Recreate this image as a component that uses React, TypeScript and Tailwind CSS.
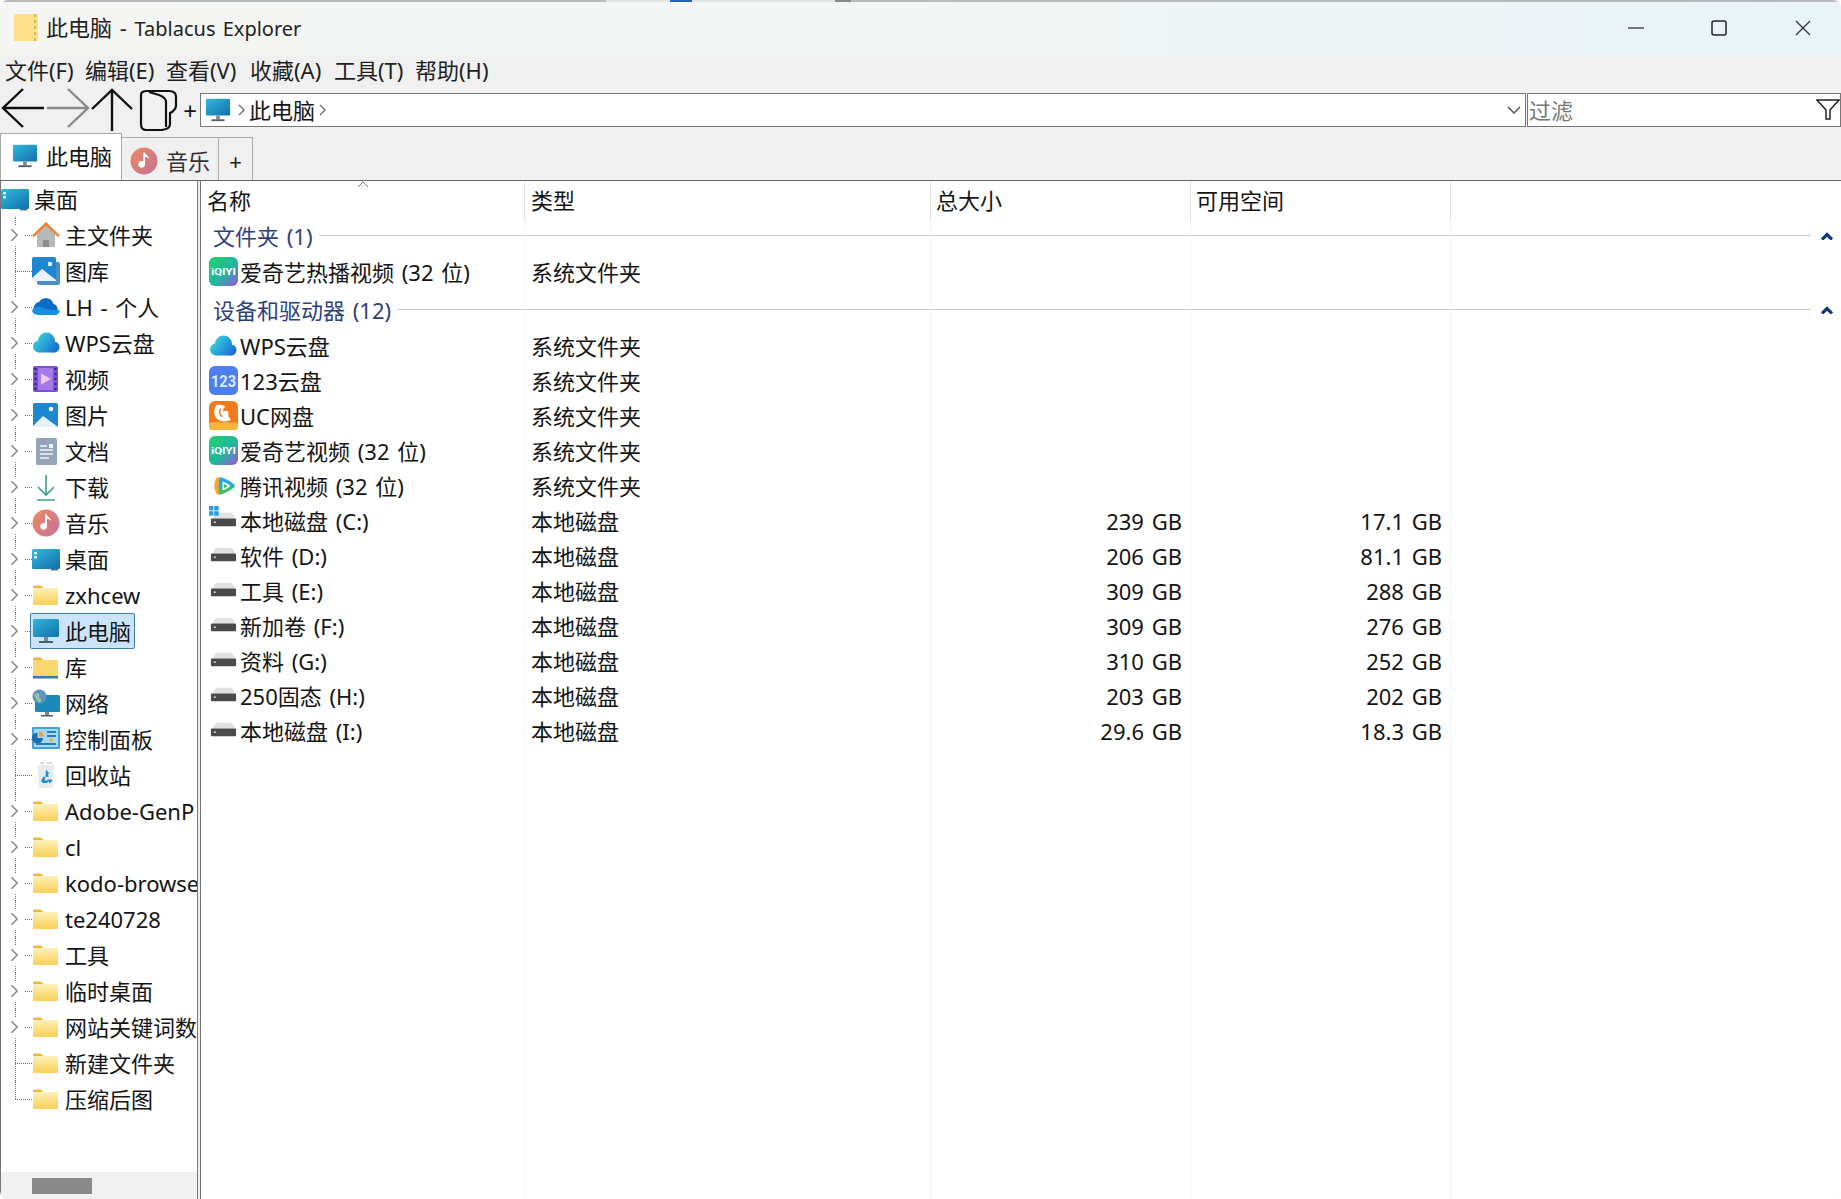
import React from "react";

const Monitor = ({ className = "w-7 h-7" }: { className?: string }) => (
  <svg viewBox="0 0 28 28" className={className}>
    <defs>
      <linearGradient id="mon" x1="0" y1="0" x2="1" y2="1">
        <stop offset="0" stopColor="#35b8e0" />
        <stop offset="1" stopColor="#0f6fa8" />
      </linearGradient>
    </defs>
    <rect x="1" y="2" width="26" height="18" rx="1.5" fill="url(#mon)" />
    <rect x="12" y="20" width="4" height="4" fill="#7a8a94" />
    <rect x="7" y="24" width="14" height="2" fill="#4e5d66" />
  </svg>
);

const Folder = () => (
  <svg viewBox="0 0 28 28" className="w-7 h-7">
    <defs>
      <linearGradient id="fold" x1="0" y1="0" x2="0" y2="1">
        <stop offset="0" stopColor="#fff0b8" />
        <stop offset="1" stopColor="#fbcf55" />
      </linearGradient>
    </defs>
    <path d="M1 6a1.5 1.5 0 0 1 1.5-1.5h6l3 2.5H1z" fill="#efb23c" />
    <rect x="1" y="7" width="25" height="17" rx="1" fill="url(#fold)" />
  </svg>
);

const LibFolder = () => (
  <svg viewBox="0 0 28 28" className="w-7 h-7">
    <path d="M1 6a1.5 1.5 0 0 1 1.5-1.5h6l3 2.500H1z" fill="#efb23c" />
    <rect x="1" y="7" width="25" height="17" rx="1" fill="#fcd76f" />
    <rect x="1" y="23" width="25" height="2.500" fill="#2c7ea6" />
  </svg>
);

const Home = () => (
  <svg viewBox="0 0 28 28" className="w-7 h-7">
    <path d="M5 13 14 5l9 8v12a1 1 0 0 1-1 1h-5v-7h-6v7H6a1 1 0 0 1-1-1z" fill="#b8b8b8" />
    <rect x="11" y="19" width="6" height="7" fill="#8c8c8c" />
    <path d="M0 14.500 14 1l14 13.500-2 1.500L14 5 2 16z" fill="#e8853a" />
  </svg>
);

const Gallery = () => (
  <svg viewBox="0 0 28 28" className="w-7 h-7">
    <rect x="5" y="5" width="23" height="23" rx="2" fill="#4b8fc4" />
    <rect x="0" y="0" width="24" height="24" rx="2" fill="#1d87d0" />
    <path d="M0 21 10 12l14 11v1H0z" fill="#e8f2fa" />
    <circle cx="18" cy="7" r="2.200" fill="#fff" />
  </svg>
);

const OneDrive = () => (
  <svg viewBox="0 0 28 28" className="w-7 h-7">
    <path d="M8 22a6.500 6.500 0 0 1-1-12.900A8 8 0 0 1 21.500 11 5.800 5.800 0 0 1 22 22z" fill="#0a6cc4" />
    <path d="M0 18c1-4 5-5 8-4 3 1 10 4 20 3-.5 3-2.500 5-5 5H7c-3 0-6-1-7-4z" fill="#1490df" />
  </svg>
);

const WpsCloud = () => (
  <svg viewBox="0 0 28 28" className="w-7 h-7">
    <defs>
      <linearGradient id="wps" gradientUnits="userSpaceOnUse" x1="2" y1="6" x2="26" y2="24">
        <stop offset="0" stopColor="#3fdcd8" />
        <stop offset="1" stopColor="#1462d8" />
      </linearGradient>
    </defs>
    <g fill="url(#wps)">
      <circle cx="7" cy="17.500" r="6" />
      <circle cx="14.500" cy="12" r="8.500" />
      <circle cx="22" cy="18" r="5.500" />
      <rect x="7" y="16" width="15" height="7.500" />
    </g>
  </svg>
);

const Video = () => (
  <svg viewBox="0 0 28 28" className="w-7 h-7">
    <rect x="1" y="1" width="25" height="26" rx="2" fill="#7c4fd8" />
    <rect x="6" y="3" width="15" height="22" fill="#a57bec" />
    <path d="M9 8.500 19 14 9 19.500z" fill="#f3c9f2" />
    <path d="M2.500 4h2M2.500 9h2M2.500 14h2M2.500 19h2M2.500 24h2M22.500 4h2M22.500 9h2M22.500 14h2M22.500 19h2M22.500 24h2" stroke="#35226e" strokeWidth="2" />
  </svg>
);

const Picture = () => (
  <svg viewBox="0 0 28 28" className="w-7 h-7">
    <rect x="1" y="2" width="25" height="24" rx="1.500" fill="#1d87d0" />
    <path d="M1 25 11 15l15 11H1z" fill="#e8f2fa" />
    <circle cx="19" cy="8" r="2.300" fill="#fff" />
  </svg>
);

const Doc = () => (
  <svg viewBox="0 0 28 28" className="w-7 h-7">
    <rect x="4" y="1" width="21" height="27" rx="1.500" fill="#93a3b8" />
    <path d="M8 9h7M8 13h13M8 17h13M8 21h9" stroke="#f2f5f8" strokeWidth="1.600" />
    <rect x="17" y="7" width="4" height="4" fill="#f2f5f8" />
  </svg>
);

const Download = () => (
  <svg viewBox="0 0 28 28" className="w-7 h-7" fill="none" stroke="#3aa28a" strokeWidth="1.600">
    <path d="M14 2v19M6 14l8 8 8-8M5 27h18" />
  </svg>
);

const Music = ({ className = "w-7 h-7" }: { className?: string }) => (
  <svg viewBox="0 0 28 28" className={className}>
    <defs>
      <linearGradient id="mus" x1="0" y1="0" x2="1" y2="1">
        <stop offset="0" stopColor="#ee8a5e" />
        <stop offset="1" stopColor="#c4729c" />
      </linearGradient>
    </defs>
    <circle cx="14" cy="14" r="13.500" fill="url(#mus)" />
    <path d="M15 5.500v11.800a3.400 3.400 0 1 1-1.800-3V5.500zM15 6c1 2.500 4 2.500 4 6-1.200-1.800-2.600-2.300-4-2.500z" fill="#fff" />
  </svg>
);

const Desktop = ({ className = "w-7 h-7" }: { className?: string }) => (
  <svg viewBox="0 0 28 28" className={className}>
    <defs>
      <linearGradient id="desk" x1="0" y1="0" x2="1" y2="1">
        <stop offset="0" stopColor="#35b8e0" />
        <stop offset="1" stopColor="#0f6fa8" />
      </linearGradient>
    </defs>
    <rect x="0" y="4" width="28" height="20" rx="1.500" fill="url(#desk)" />
    <rect x="19" y="24" width="7" height="1.500" fill="#4b7890" />
    <rect x="2" y="7" width="3" height="2.500" fill="#cfeef8" />
    <rect x="2" y="11" width="3" height="2.500" fill="#cfeef8" />
  </svg>
);

const Network = () => (
  <svg viewBox="0 0 28 28" className="w-7 h-7">
    <rect x="3" y="6" width="25" height="17" rx="1.500" fill="#1b8ab8" />
    <rect x="13" y="23" width="4" height="3" fill="#7a8a94" />
    <rect x="9" y="26" width="12" height="1.500" fill="#4e5d66" />
    <circle cx="7.500" cy="7.500" r="7" fill="#5d94bd" />
    <path d="M3 5c3-2 5 0 4 2s3 2 2 5-3 1-4-1-3-3-2-6z" fill="#9cc3a0" />
  </svg>
);

const Control = () => (
  <svg viewBox="0 0 28 28" className="w-7 h-7">
    <rect x="0" y="2" width="28" height="22" rx="1" fill="#3fa4dc" />
    <rect x="2" y="4" width="24" height="18" fill="#a6d8f2" />
    <path d="M11 13A5.500 5.500 0 1 1 5.500 7.500V13z" fill="#1f6fb0" />
    <path d="M7 6.500a5 5 0 0 1 5 5H7z" fill="#f0a030" />
    <path d="M15 7h9M15 11h9M4 19h20" stroke="#2a7db5" strokeWidth="2" />
    <circle cx="19" cy="15" r="1.800" fill="#e8b030" />
  </svg>
);

const Recycle = () => (
  <svg viewBox="0 0 28 28" className="w-7 h-7">
    <path d="M6 4h16l-1 23H7z" fill="#e6ebf0" />
    <path d="M8 2h4M15 2h5" stroke="#c8cfd6" strokeWidth="1.500" />
    <path d="M14 8.500l3.500 4.500h-2l1.500 2.500-3.500.5zM9 20l2.500-4.500 2 1-1 3h3v2.500h-4.500zM20.500 20l-3.500 2.500v-2h-1.500v-2h4z" fill="#1f86d6" />
  </svg>
);

const Iqiyi = () => (
  <svg viewBox="0 0 30 30" className="w-[29px] h-[29px]">
    <defs>
      <linearGradient id="iq" x1="0" y1="0" x2="1" y2="1">
        <stop offset="0" stopColor="#1fd36a" />
        <stop offset="0.55" stopColor="#22b6a0" />
        <stop offset="1" stopColor="#9d52e0" />
      </linearGradient>
    </defs>
    <rect width="30" height="30" rx="6" fill="url(#iq)" />
    <text x="2" y="19" textLength="26" lengthAdjust="spacingAndGlyphs" fontSize="10" fontWeight="700" fill="#fff" fontFamily="Roboto, sans-serif">iQIYI</text>
  </svg>
);

const Pan123 = () => (
  <svg viewBox="0 0 30 30" className="w-[29px] h-[29px]">
    <rect width="30" height="30" rx="6" fill="#4e7ff0" />
    <text x="2" y="21.500" textLength="26" lengthAdjust="spacingAndGlyphs" fontSize="17" fontWeight="700" fill="#dfe9ff" fontFamily="Roboto, sans-serif">123</text>
  </svg>
);

const UcDisk = () => (
  <svg viewBox="0 0 30 30" className="w-[29px] h-[29px]">
    <rect width="30" height="30" rx="6" fill="#f07a1c" />
    <rect y="22" width="30" height="8" rx="3" fill="#f8b638" />
    <path d="M8 4c-4 5-3 12 1 15 4 3 10 3 14 0-2-1-3-3-3-5 1-3-2-5-5-3-1-2 0-4 2-5-3-2-6-2-9-2z" fill="#fff" />
    <path d="M12 8c-2 3-1 7 2 8" stroke="#f07a1c" strokeWidth="1.500" fill="none" />
  </svg>
);

const Tencent = () => (
  <svg viewBox="0 0 30 30" className="w-[29px] h-[29px]">
    <g transform="translate(4 4) scale(0.76)">
      <path d="M6 3c7 1 15 5 21 10 1 1 1 3 0 4-6 5-14 9-21 10-2-3-4-7-4-12S4 6 6 3z" fill="#f5a623" />
      <path d="M10 3c6 2 13 5 19 10 1 1 1 3 0 4-6 5-13 8-19 10-1.500-3-2-7-2-12S8.500 6 10 3z" fill="#2aa7e8" />
      <path d="M9 27c7-2 13-5 20-10 .5-.5.700-1 .8-1.500L9 20z" fill="#37c25a" />
      <path d="M13 9c4 1 8 3 11 6-3 3-7 5-11 6z" fill="#e8fbe8" />
      <path d="M15 12.500l5 2.800-5 2.800z" fill="#37c25a" />
    </g>
  </svg>
);

const Disk = ({ win = false }: { win?: boolean }) => (
  <svg viewBox="0 0 30 30" className="w-[29px] h-[29px]">
    <path d="M4 13c1-4 3-6 5-6h12c3 0 5 2 6 6z" fill="#dfe2e4" />
    <rect x="2" y="13" width="26" height="8" rx="1" fill="#4a4a4a" />
    <rect x="5" y="16" width="2" height="1.500" fill="#dfe2e4" />
    {win && (
      <g fill="#2e9be0">
        <rect x="0" y="0" width="4.600" height="4.600" />
        <rect x="5.400" y="0" width="4.600" height="4.600" />
        <rect x="0" y="5.400" width="4.600" height="4.600" />
        <rect x="5.400" y="5.400" width="4.600" height="4.600" />
      </g>
    )}
  </svg>
);

const Chevron = () => (
  <svg viewBox="0 0 10 16" className="w-[9px] h-[14px]" fill="none" stroke="#8a8a8a" strokeWidth="1.800">
    <path d="M1.500 1.500 8 8l-6.500 6.500" />
  </svg>
);

const tree: { icon: React.ReactNode; label: string; exp: boolean }[] = [
  { icon: <Home />, label: "主文件夹", exp: true },
  { icon: <Gallery />, label: "图库", exp: false },
  { icon: <OneDrive />, label: "LH - 个人", exp: true },
  { icon: <WpsCloud />, label: "WPS云盘", exp: true },
  { icon: <Video />, label: "视频", exp: true },
  { icon: <Picture />, label: "图片", exp: true },
  { icon: <Doc />, label: "文档", exp: true },
  { icon: <Download />, label: "下载", exp: true },
  { icon: <Music />, label: "音乐", exp: true },
  { icon: <Desktop />, label: "桌面", exp: true },
  { icon: <Folder />, label: "zxhcew", exp: true },
  { icon: <Monitor />, label: "此电脑", exp: true },
  { icon: <LibFolder />, label: "库", exp: true },
  { icon: <Network />, label: "网络", exp: true },
  { icon: <Control />, label: "控制面板", exp: true },
  { icon: <Recycle />, label: "回收站", exp: false },
  { icon: <Folder />, label: "Adobe-GenP", exp: true },
  { icon: <Folder />, label: "cl", exp: true },
  { icon: <Folder />, label: "kodo-browser", exp: true },
  { icon: <Folder />, label: "te240728", exp: true },
  { icon: <Folder />, label: "工具", exp: true },
  { icon: <Folder />, label: "临时桌面", exp: true },
  { icon: <Folder />, label: "网站关键词数据", exp: true },
  { icon: <Folder />, label: "新建文件夹", exp: false },
  { icon: <Folder />, label: "压缩后图", exp: false },
];

const TreeRow = ({ item, last }: { item: (typeof tree)[number]; last: boolean }) => (
  <div className="relative flex h-9 shrink-0 items-center whitespace-nowrap">
    <div className={`absolute left-[14px] top-0 border-l border-dotted border-[#777] ${last ? "h-[18px]" : "h-9"}`} />
    <div className="absolute left-[14px] top-[18px] w-[17px] border-t border-dotted border-[#777]" />
    {item.exp && (
      <div className="absolute left-[3px] top-[8px] flex h-5 w-[20px] items-center justify-center bg-white">
        <Chevron />
      </div>
    )}
    {item.label === "此电脑" && <div className="absolute left-[29px] top-0 h-9 w-[105px] rounded-[2px] border border-[#3f7fa8] bg-[#cce4f9]" />}
    <div className="relative ml-[31px] w-7 shrink-0">{item.icon}</div>
    <span className="relative ml-[5px]">{item.label}</span>
  </div>
);

const rows: { icon: React.ReactNode; name: string; type: string; total?: string; free?: string }[] = [
  { icon: <WpsCloud />, name: "WPS云盘", type: "系统文件夹" },
  { icon: <Pan123 />, name: "123云盘", type: "系统文件夹" },
  { icon: <UcDisk />, name: "UC网盘", type: "系统文件夹" },
  { icon: <Iqiyi />, name: "爱奇艺视频 (32 位)", type: "系统文件夹" },
  { icon: <Tencent />, name: "腾讯视频 (32 位)", type: "系统文件夹" },
  { icon: <Disk win />, name: "本地磁盘 (C:)", type: "本地磁盘", total: "239 GB", free: "17.1 GB" },
  { icon: <Disk />, name: "软件 (D:)", type: "本地磁盘", total: "206 GB", free: "81.1 GB" },
  { icon: <Disk />, name: "工具 (E:)", type: "本地磁盘", total: "309 GB", free: "288 GB" },
  { icon: <Disk />, name: "新加卷 (F:)", type: "本地磁盘", total: "309 GB", free: "276 GB" },
  { icon: <Disk />, name: "资料 (G:)", type: "本地磁盘", total: "310 GB", free: "252 GB" },
  { icon: <Disk />, name: "250固态 (H:)", type: "本地磁盘", total: "203 GB", free: "202 GB" },
  { icon: <Disk />, name: "本地磁盘 (I:)", type: "本地磁盘", total: "29.6 GB", free: "18.3 GB" },
];

const FileRow = ({ icon, name, type, total, free }: { icon: React.ReactNode; name: string; type: string; total?: string; free?: string }) => (
  <div className="flex h-[35px] shrink-0 items-center whitespace-nowrap pb-[2px]">
    <div className="flex w-[323px] shrink-0 items-center pl-[8px]">
      <div className="w-[29px] shrink-0">{icon}</div>
      <span className="ml-[2px]">{name}</span>
    </div>
    <div className="w-[406px] shrink-0 pl-[7px]">{type}</div>
    <div className="w-[260px] shrink-0 pr-[8px] text-right">{total}</div>
    <div className="w-[260px] shrink-0 pr-[8px] text-right">{free}</div>
  </div>
);

const Group = ({ label }: { label: string }) => (
  <div className="flex h-[39px] shrink-0 items-center pl-[12px] pr-[8px]">
    <span className="whitespace-nowrap text-[#2d3f7c]">{label}</span>
    <div className="ml-[6px] h-px flex-1 bg-[#c4cad1]" />
    <svg viewBox="0 0 12 8" className="ml-[10px] h-[8px] w-[12px]" fill="none" stroke="#123a7a" strokeWidth="3.200">
      <path d="M1 7.500 6 2.500l5 5" />
    </svg>
  </div>
);

export default function App() {
  return (
    <div className="flex h-[1199px] w-[1841px] flex-col overflow-hidden rounded-[8px] bg-[#f0f0f0] font-['Noto_Sans','Noto_Sans_CJK_SC',sans-serif] text-[22px] leading-[30px] text-[#141414] [word-spacing:2px]">
      {/* title bar */}
      <div className="flex h-[2px] shrink-0">
        <div className="w-[606px] bg-[#b8bcbc]" />
        <div className="w-[64px] bg-[#e4e6e6]" />
        <div className="w-[22px] bg-[#2a62c4]" />
        <div className="w-[143px] bg-[#e4e6e6]" />
        <div className="w-[16px] bg-[#888]" />
        <div className="flex-1 bg-[#b8bcbc]" />
      </div>
      <div className="flex h-[54px] shrink-0 items-center bg-gradient-to-r from-[#f5f6f4] via-[#f2f6f4] to-[#e8f3f8] pb-[2px] pl-[14px]">
        <svg viewBox="0 0 24 28" className="h-[28px] w-[24px]">
          <rect x="0" y="0" width="24" height="27" fill="#fde08a" />
          <path d="M21 0v27" stroke="#d8b850" strokeWidth="2" strokeDasharray="3 3" />
        </svg>
        <span className="ml-[8px] text-[#222]">
          此电脑 - <span className="text-[20px]">Tablacus Explorer</span>
        </span>
        <div className="ml-auto flex items-center">
          <svg viewBox="0 0 16 16" className="h-[16px] w-[16px]" stroke="#333" strokeWidth="1.300" fill="none"><path d="M0 8h16" /></svg>
          <svg viewBox="0 0 16 16" className="ml-[67px] h-[16px] w-[16px]" stroke="#222" strokeWidth="1.500" fill="none"><rect x="1" y="1" width="14" height="14" rx="2" /></svg>
          <svg viewBox="0 0 16 16" className="ml-[68px] mr-[30px] h-[16px] w-[16px]" stroke="#333" strokeWidth="1.300" fill="none"><path d="M1 1l14 14M15 1 1 15" /></svg>
        </div>
      </div>

      {/* menu */}
      <div className="flex h-[32px] shrink-0 items-center pb-[4px] pl-[5px] whitespace-nowrap text-[#1e1e1e]">
        <span className="w-[80px]">文件(F)</span>
        <span className="w-[81px]">编辑(E)</span>
        <span className="w-[84px]">查看(V)</span>
        <span className="w-[84px]">收藏(A)</span>
        <span className="w-[81px]">工具(T)</span>
        <span>帮助(H)</span>
      </div>

      {/* toolbar */}
      <div className="flex h-[45px] shrink-0 items-start whitespace-nowrap">
        <svg viewBox="0 0 190 45" className="h-[45px] w-[190px] shrink-0" fill="none" strokeWidth="2.400">
          <path d="M44 20H3M23 1 3 20l20 19" stroke="#111" />
          <path d="M47 20h41M68 1l20 19-20 19" stroke="#8a8a8a" />
          <path d="M112 43V2M92 21 112 2l20 19" stroke="#111" />
          <path d="M147 3h22c4 0 7 2 7 6v9c0 3-2 4-4 6l-2 1v11c0 4-3 5-8 6l-3 0H146c-4 0-5-3-5-6V7c0-3 2-4 6-4zm2 1 10 3c3 1 6 3 7 6v26" stroke="#111" strokeWidth="2.200" />
        </svg>
        <span className="ml-[-8px] mr-[2px] mt-[8px] w-[16px] text-center text-[24px]">+</span>
        <div className="mt-[5px] flex h-[34px] w-[1326px] items-center border border-[#777] bg-white pl-[4px]">
          <Monitor className="h-[26px] w-[26px]" />
          <svg viewBox="0 0 8 14" className="ml-[7px] h-[12px] w-[7px]" fill="none" stroke="#666" strokeWidth="1.500"><path d="m1 1 6 6-6 6" /></svg>
          <span className="ml-[4px]">此电脑</span>
          <svg viewBox="0 0 8 14" className="ml-[4px] h-[12px] w-[7px]" fill="none" stroke="#666" strokeWidth="1.500"><path d="m1 1 6 6-6 6" /></svg>
          <svg viewBox="0 0 14 8" className="ml-auto mr-[4px] h-[8px] w-[14px]" fill="none" stroke="#555" strokeWidth="1.500"><path d="m1 1 6 6 6-6" /></svg>
        </div>
        <div className="ml-[1px] mt-[5px] flex h-[34px] flex-1 items-center border border-[#777] bg-white pl-[1px] text-[#777]">
          <span>过滤</span>
          <svg viewBox="0 0 24 22" className="ml-auto h-[22px] w-[24px]" fill="none" stroke="#222" strokeWidth="1.500"><path d="M1 1h22l-9 10v9h-4v-9z" /></svg>
        </div>
      </div>

      {/* tabs */}
      <div className="flex h-[48px] shrink-0 items-end border-b border-[#666] whitespace-nowrap">
        <div className="flex h-[47px] w-[122px] items-center border border-b-0 border-[#aaa] bg-white pb-[2px] pl-[11px]">
          <Monitor className="h-[26px] w-[26px]" />
          <span className="ml-[8px]">此电脑</span>
        </div>
        <div className="flex h-[43px] w-[97px] items-center border-r border-t border-[#aaa] pl-[8px] pt-[3px]">
          <Music />
          <span className="ml-[8px] text-[#333]">音乐</span>
        </div>
        <div className="flex h-[43px] w-[34px] items-center justify-center border-r border-t border-[#aaa] pt-[3px]">+</div>
      </div>

      {/* panes */}
      <div className="flex min-h-0 flex-1">
        <div className="flex w-[198px] shrink-0 flex-col overflow-hidden border-l border-r border-[#777] bg-white">
          <div className="flex min-h-0 flex-1 flex-col overflow-hidden">
            <div className="flex h-9 shrink-0 items-center">
              <Desktop />
              <span className="ml-[5px]">桌面</span>
            </div>
            {tree.map((t, i) => (
              <TreeRow key={i} item={t} last={i === tree.length - 1} />
            ))}
          </div>
          <div className="flex h-[27px] shrink-0 items-center bg-[#f0f0f0] pl-[31px]">
            <div className="h-[16px] w-[60px] bg-[#8a8a8a]" />
          </div>
        </div>

        <div className="relative ml-[2px] flex min-w-0 flex-1 flex-col border-l border-[#777] bg-white">
          {/* column lines */}
          <div className="absolute bottom-0 left-[323px] top-[39px] w-px bg-[#f3f5f5]" />
          <div className="absolute bottom-0 left-[729px] top-[39px] w-px bg-[#f3f5f5]" />
          <div className="absolute bottom-0 left-[989px] top-[39px] w-px bg-[#f3f5f5]" />
          <div className="absolute bottom-0 left-[1249px] top-[39px] w-px bg-[#f3f5f5]" />

          <div className="relative flex h-[35px] shrink-0 whitespace-nowrap">
            <svg viewBox="0 0 12 7" className="absolute left-[156px] top-0 h-[7px] w-[12px]" fill="none" stroke="#777" strokeWidth="1"><path d="M1 6 6 1l5 5" /></svg>
            <div className="h-[39px] w-[324px] shrink-0 border-r border-[#e4e4e4] pl-[6px] pt-[4px]">名称</div>
            <div className="h-[39px] w-[406px] shrink-0 border-r border-[#e4e4e4] pl-[6px] pt-[4px]">类型</div>
            <div className="h-[39px] w-[260px] shrink-0 border-r border-[#e4e4e4] pl-[5px] pt-[4px]">总大小</div>
            <div className="h-[39px] w-[260px] shrink-0 border-r border-[#e4e4e4] pl-[5px] pt-[4px]">可用空间</div>
          </div>

          <Group label="文件夹 (1)" />
          <FileRow icon={<Iqiyi />} name="爱奇艺热播视频 (32 位)" type="系统文件夹" />
          <Group label="设备和驱动器 (12)" />
          {rows.map((r) => (
            <FileRow key={r.name} {...r} />
          ))}
        </div>
      </div>
    </div>
  );
}
